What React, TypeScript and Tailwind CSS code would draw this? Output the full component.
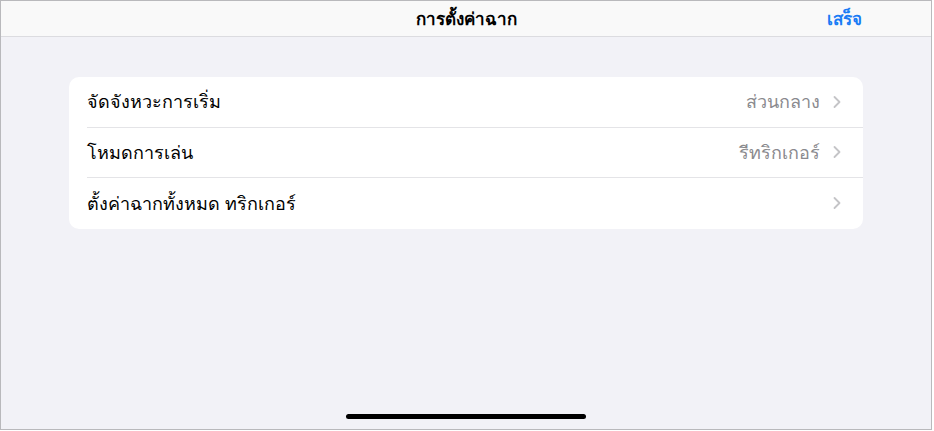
import { ChevronRight } from 'lucide-react';

const rows = [
  { label: 'จัดจังหวะการเริ่ม', value: 'ส่วนกลาง' },
  { label: 'โหมดการเล่น', value: 'รีทริกเกอร์' },
  { label: 'ตั้งค่าฉากทั้งหมด ทริกเกอร์', value: '' },
];

export default function App() {
  return (
    <div className="h-[431px] w-[934px] bg-white" style={{ fontFamily: '"Noto Sans", "Open Sans", sans-serif' }}>
      <div className="flex h-[430px] w-[932px] flex-col border border-[#b9b9bc] bg-[#f2f2f7]">
        <div className="relative flex h-[36px] shrink-0 items-center justify-center border-b border-[#dcdce0] bg-[#f9f9f9]">
          <span className="text-[17px] font-semibold text-black">การตั้งค่าฉาก</span>
          <span className="absolute right-[69px] text-[17px] font-semibold text-[#1a7cf5]">เสร็จ</span>
        </div>
        <div className="flex flex-1 flex-col px-[68px] pt-[40px]">
          <div className="overflow-hidden rounded-[10px] bg-white">
            {rows.map((row, i) => (
              <div key={i} className="flex h-[50.5px] items-center pl-[18px]">
                <div
                  className={`flex h-full flex-1 items-center pr-[16px] ${i < rows.length - 1 ? 'border-b border-[#e4e4e7]' : ''}`}
                >
                  <span className="flex-1 text-[18px] text-black">{row.label}</span>
                  {row.value && <span className="text-[18px] text-[#8a8a8e]">{row.value}</span>}
                  <ChevronRight className="ml-[7px] h-[20px] w-[20px] text-[#c4c4c7]" strokeWidth={2.2} />
                </div>
              </div>
            ))}
          </div>
          <div className="mt-auto mb-[10px] flex justify-center">
            <div className="h-[5px] w-[240px] rounded-full bg-black" />
          </div>
        </div>
      </div>
    </div>
  );
}
